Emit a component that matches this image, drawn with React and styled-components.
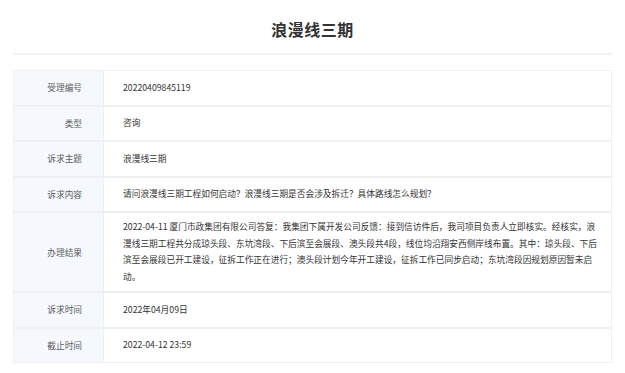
import styled, { createGlobalStyle } from "styled-components";

const GlobalStyle = createGlobalStyle`
  html, body {
    margin: 0;
    padding: 0;
    background: #ffffff;
  }
  body {
    font-family: "Noto Sans CJK SC", "Noto Sans", sans-serif;
  }
`;

const rows = [
  { label: "受理编号", value: "20220409845119" },
  { label: "类型", value: "咨询" },
  { label: "诉求主题", value: "浪漫线三期" },
  {
    label: "诉求内容",
    value: "请问浪漫线三期工程如何启动？浪漫线三期是否会涉及拆迁？具体路线怎么规划？",
  },
  {
    label: "办理结果",
    value:
      "2022-04-11 厦门市政集团有限公司答复：我集团下属开发公司反馈：接到信访件后，我司项目负责人立即核实。经核实，浪漫线三期工程共分成琼头段、东坑湾段、下后滨至会展段、澳头段共4段，线位均沿翔安西侧岸线布置。其中：琼头段、下后滨至会展段已开工建设，征拆工作正在进行；澳头段计划今年开工建设，征拆工作已同步启动；东坑湾段因规划原因暂未启动。",
    long: true,
  },
  { label: "诉求时间", value: "2022年04月09日" },
  { label: "截止时间", value: "2022-04-12 23:59" },
];

export default function App() {
  return (
    <>
      <GlobalStyle />
      <Page>
        <Header>
          <Title>浪漫线三期</Title>
        </Header>
        <Table>
          {rows.map((row) => (
            <Row key={row.label}>
              <Label>{row.label}</Label>
              <Value $long={row.long}>{row.value}</Value>
            </Row>
          ))}
        </Table>
      </Page>
    </>
  );
}

const Page = styled.div`
  padding: 0 13px;
`;

const Header = styled.div`
  height: 53px;
  display: flex;
  align-items: center;
  justify-content: center;
  border-bottom: 2px solid #f2f2f2;
  margin-bottom: 15px;
`;

const Title = styled.h1`
  margin: 0;
  padding-top: 5px;
  font-size: 16px;
  font-weight: bold;
  color: #333333;
  letter-spacing: 0.5px;
`;

const Table = styled.div`
  border: 1px solid #eef0f3;
  display: flex;
  flex-direction: column;
`;

const Row = styled.div`
  display: grid;
  grid-template-columns: 90px 1fr;
  border-bottom: 2px solid #eef0f3;

  &:last-child {
    border-bottom: none;
  }
`;

const Label = styled.div`
  background: #f5f9fe;
  border-right: 1px solid #eef0f3;
  display: flex;
  align-items: center;
  justify-content: flex-end;
  padding-right: 21px;
  font-size: 8.7px;
  color: #5c5c5c;
`;

const Value = styled.div`
  min-height: 33.5px;
  box-sizing: border-box;
  display: flex;
  align-items: center;
  padding: ${(p) => (p.$long ? "6px 12px 6px 19px" : "0 12px 0 19px")};
  font-size: 8.7px;
  line-height: 16.5px;
  color: #333333;
`;
